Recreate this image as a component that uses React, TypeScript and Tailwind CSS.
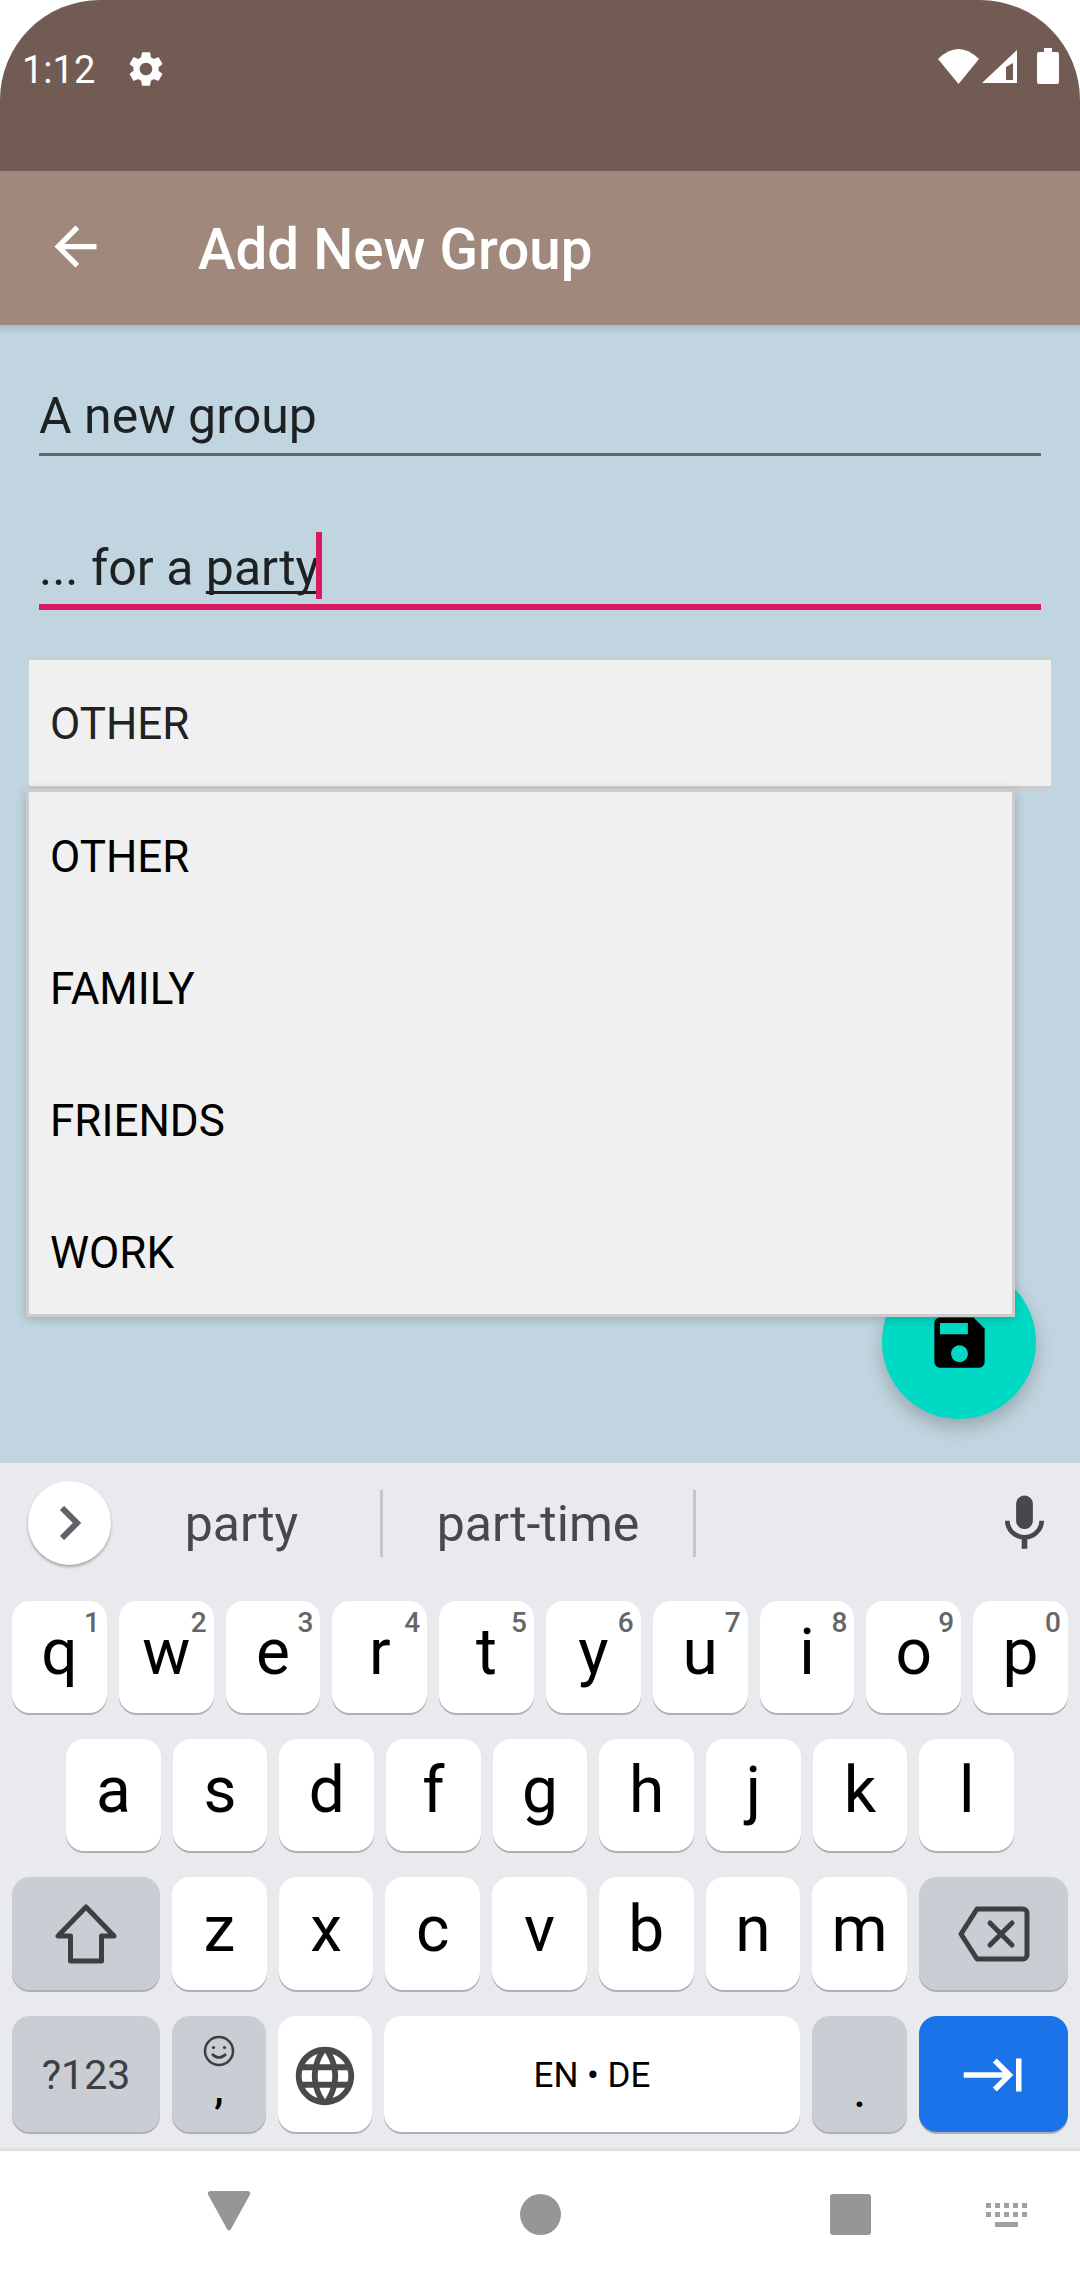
import { MdArrowBack, MdKeyboardTab, MdLanguage, MdMic, MdSave, MdSettings } from "react-icons/md";

const row1 = [
  ["q", "1"],
  ["w", "2"],
  ["e", "3"],
  ["r", "4"],
  ["t", "5"],
  ["y", "6"],
  ["u", "7"],
  ["i", "8"],
  ["o", "9"],
  ["p", "0"],
];
const row2 = ["a", "s", "d", "f", "g", "h", "j", "k", "l"];
const row3 = ["z", "x", "c", "v", "b", "n", "m"];
const options = ["OTHER", "FAMILY", "FRIENDS", "WORK"];

function Key({ label, hint }: { label: string; hint?: string }) {
  return (
    <div className="relative flex flex-1 items-center justify-center rounded-[18px] bg-white text-[64px] leading-none text-black shadow-[0_2px_0_#aeb0b3]">
      <span className="-mt-[8px]">{label}</span>
      {hint && (
        <span className="absolute right-[7px] top-[6px] text-[28px] font-medium leading-[32px] text-[#666]">
          {hint}
        </span>
      )}
    </div>
  );
}

function StatusBar() {
  return (
    <div className="flex h-[171px] shrink-0 items-start justify-between rounded-t-[100px] bg-[#725b53] pl-[22px] pr-[21px] pt-[46px] text-white">
      <div className="flex items-center gap-[30px]">
        <span className="mt-[2px] text-[38px] leading-[44px]">1:12</span>
        <MdSettings size={42} />
      </div>
      <div className="flex items-start gap-[3px] pt-[3px]">
        <svg width="41" height="35" viewBox="0 0 41 35" fill="#fff">
          <path d="M0 10Q20.500-10 41 10L20.500 35Z" />
        </svg>
        <svg width="35" height="35" viewBox="0 0 35 35" fill="#fff">
          <path fillRule="evenodd" d="M0 34L35 1V34ZM24 18V31H31V14Z" />
        </svg>
        <svg width="22" height="36" viewBox="0 0 22 36" fill="#fff" className="ml-[17px] -mt-[1px]">
          <path d="M7 0H15V4H20A2 2 0 0 1 22 6V34A2 2 0 0 1 20 36H2A2 2 0 0 1 0 34V6A2 2 0 0 1 2 4H7Z" />
        </svg>
      </div>
    </div>
  );
}

function Form() {
  return (
    <div className="relative flex-1 bg-[#c1d5e0]">
      <div className="absolute inset-x-0 top-0 h-[10px] bg-gradient-to-b from-[#a9bdca] to-[#c1d5e0]" />
      <div className="flex flex-col px-[29px] pt-[65px]">
        <div className="mx-[10px] h-[66px] border-b-[3px] border-[#5c666c] text-[50px] leading-[52px] text-[#1d2122]">
          A new group
        </div>
        <div className="mx-[10px] mt-[75px] flex h-[79px] items-start border-b-[6px] border-[#d81b60] text-[50px] leading-[54px] text-[#1d2122]">
          <span className="mt-[10px] whitespace-pre">
            ... for a{" "}
            <span className="underline decoration-[3px] underline-offset-[6px] [text-decoration-skip-ink:none]">party</span>
          </span>
          <span className="-ml-[3px] mt-[1px] h-[67px] w-[6px] bg-[#d81b60]" />
        </div>
        <div className="mt-[47px] flex h-[132px] items-center border-y-[3px] border-[#cccccc] bg-[#f0f0f0] pl-[21px] pt-[2px] text-[44px] text-[#222]">
          OTHER
        </div>
      </div>

      <button className="absolute left-[882px] top-[940px] flex h-[154px] w-[154px] items-center justify-center rounded-full bg-[#00dac5] shadow-[0_8px_18px_rgba(0,0,0,0.22)]">
        <MdSave size={67} color="#000" />
      </button>

      <div className="absolute left-[26px] top-[464px] flex h-[528px] w-[989px] flex-col overflow-hidden border-[3px] border-[#cccccc] bg-[#f0f0f0] shadow-[0_2px_10px_rgba(0,0,0,0.2)]">
        <div className="-mt-[1px]">
          {options.map((o) => (
            <div key={o} className="flex h-[132px] items-center pl-[21px] text-[44px] text-black">
              {o}
            </div>
          ))}
        </div>
      </div>
    </div>
  );
}

function Keyboard() {
  return (
    <div className="flex h-[688px] shrink-0 flex-col border-b-[3px] border-[#e0e0e0] bg-[#e8eaed]">
      <div className="mb-[18px] flex h-[120px] shrink-0 items-center pl-[28px] pr-[37px]">
        <div className="flex h-[84px] w-[83px] items-center justify-center rounded-full bg-white shadow-[0_2px_3px_rgba(0,0,0,0.3)]">
          <svg width="22" height="34" viewBox="0 0 22 34" fill="none" stroke="#5f6368" strokeWidth="6">
            <path d="M3 2L18 17L3 32" />
          </svg>
        </div>
        <div className="flex h-[67px] w-[272px] items-center justify-center border-r-[3px] border-[#c4c6ca] pr-[8px] text-[50px] text-[#46484b]">
          <span className="mt-[3px]">party</span>
        </div>
        <div className="flex h-[67px] w-[313px] items-center justify-center border-r-[3px] border-[#c4c6ca] text-[50px] text-[#46484b]">
          <span className="mt-[3px]">part-time</span>
        </div>
        <div className="flex flex-1 justify-end">
          <MdMic size={67} color="#46484b" className="-mr-[15px]" />
        </div>
      </div>

      <div className="flex flex-col gap-[26px]">
        <div className="flex h-[112px] gap-[12px] px-[12px]">
          {row1.map(([k, n]) => (
            <Key key={k} label={k} hint={n} />
          ))}
        </div>
        <div className="flex h-[112px] gap-[12px] px-[66px]">
          {row2.map((k) => (
            <Key key={k} label={k} />
          ))}
        </div>
        <div className="flex h-[113px] gap-[12px] px-[12px]">
          <div className="flex w-[148px] items-center justify-center rounded-[18px] bg-[#cacdd4] shadow-[0_2px_0_#aeb0b3]">
            <svg width="62" height="60" viewBox="0 0 62 60" fill="none" stroke="#3c4043" strokeWidth="5" strokeLinejoin="round">
              <path d="M31 3L3 32H15.500V57H46.500V32H59Z" />
            </svg>
          </div>
          {row3.map((k) => (
            <Key key={k} label={k} />
          ))}
          <div className="flex w-[149px] items-center justify-center rounded-[18px] bg-[#cacdd4] shadow-[0_2px_0_#aeb0b3]">
            <svg width="72" height="56" viewBox="0 0 72 56" fill="none" stroke="#3c4043" strokeWidth="5" strokeLinejoin="round" strokeLinecap="round">
              <path d="M3 28L19 3H65A4 4 0 0 1 69 7V49A4 4 0 0 1 65 53H19Z" />
              <path d="M32 17L54 39M54 17L32 39" />
            </svg>
          </div>
        </div>
        <div className="flex h-[116px] gap-[12px] px-[12px]">
          <div className="flex w-[148px] items-center justify-center rounded-[18px] bg-[#cacdd4] pt-[4px] text-[41px] text-[#3c4043] shadow-[0_2px_0_#aeb0b3]">
            ?123
          </div>
          <div className="relative flex w-[94px] flex-col items-center rounded-[18px] bg-[#cacdd4] shadow-[0_2px_0_#aeb0b3]">
            <svg width="32" height="32" viewBox="0 0 32 32" fill="none" stroke="#3c4043" strokeWidth="2.500" className="mt-[19px]">
              <circle cx="16" cy="16" r="14" />
              <circle cx="10.500" cy="12.500" r="1.600" fill="#3c4043" stroke="none" />
              <circle cx="21.500" cy="12.500" r="1.600" fill="#3c4043" stroke="none" />
              <path d="M9 19Q16 26 23 19" />
            </svg>
            <span className="absolute top-[48px] text-[42px] font-medium leading-[50px] text-black">,</span>
          </div>
          <div className="flex w-[94px] items-center justify-center rounded-[18px] bg-white pt-[3px] shadow-[0_2px_0_#aeb0b3]">
            <MdLanguage size={70} color="#4a4a4a" />
          </div>
          <div className="flex flex-1 items-center justify-center rounded-[18px] bg-white pt-[4px] text-[35px] text-black shadow-[0_2px_0_#aeb0b3]">
            EN • DE
          </div>
          <div className="relative flex w-[95px] justify-center rounded-[18px] bg-[#cacdd4] shadow-[0_2px_0_#aeb0b3]">
            <span className="absolute top-[52px] text-[42px] font-medium leading-[50px] text-black">.</span>
          </div>
          <div className="flex w-[149px] items-center justify-center rounded-[18px] bg-[#1a73e8] pt-[2px] shadow-[0_2px_0_#aeb0b3]">
            <MdKeyboardTab size={66} color="#fff" />
          </div>
        </div>
      </div>
    </div>
  );
}

function NavBar() {
  return (
    <div className="flex h-[129px] shrink-0 items-start bg-white">
      <svg width="44" height="40" viewBox="0 0 44 40" fill="#969696" className="ml-[207px] mt-[40px]">
        <path d="M3 0H41A2.500 2.500 0 0 1 43 3.500L24 38Q22 41 20 38L1 3.500A2.500 2.500 0 0 1 3 0Z" />
      </svg>
      <div className="ml-[269px] mt-[43px] h-[41px] w-[41px] rounded-full bg-[#969696]" />
      <div className="ml-[269px] mt-[43px] h-[41px] w-[41px] rounded-[3px] bg-[#969696]" />
      <svg width="42" height="24" viewBox="0 0 42 24" fill="#a0a0a0" className="ml-[115px] mt-[52px]">
        <path d="M0 0H5V5H0ZM9 0H14V5H9ZM18 0H23V5H18ZM27 0H32V5H27ZM36 0H41V5H36ZM0 9H5V14H0ZM9 9H14V14H9ZM18 9H23V14H18ZM27 9H32V14H27ZM36 9H41V14H36ZM9 19H32V24H9Z" />
      </svg>
    </div>
  );
}

export default function App() {
  return (
    <div className="flex h-[2280px] w-[1080px] flex-col overflow-hidden bg-white font-[Roboto,sans-serif]">
      <StatusBar />
      <div className="flex h-[154px] shrink-0 items-center bg-[#a1887c] text-white">
        <MdArrowBack size={63} className="ml-[44px] -mt-[3px]" />
        <h1 className="ml-[91px] mt-[4px] text-[56.500px] font-medium leading-none">Add New Group</h1>
      </div>
      <Form />
      <Keyboard />
      <NavBar />
    </div>
  );
}
